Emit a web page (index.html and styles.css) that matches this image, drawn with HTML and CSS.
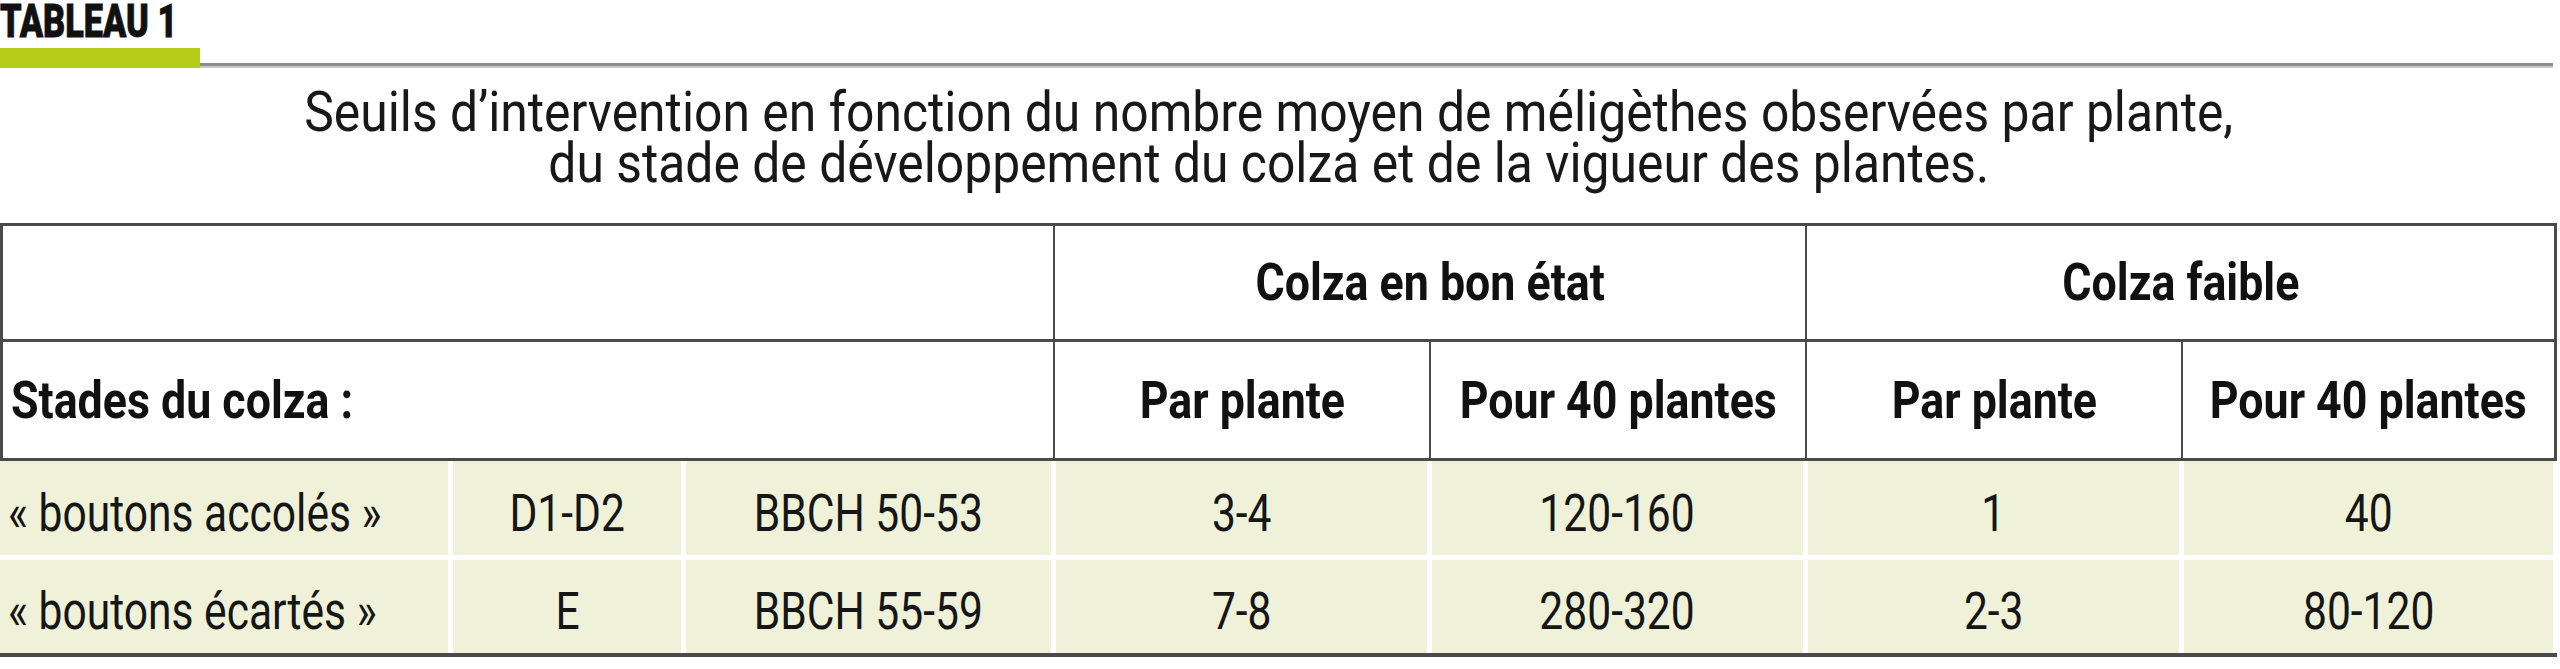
FILE: index.html
```html
<!DOCTYPE html>
<html lang="fr">
<head>
<meta charset="utf-8">
<title>Tableau 1</title>
<link rel="stylesheet" href="styles.css">
</head>
<body>
<div class="page">
  <div class="label"><span class="label-text">TABLEAU 1</span></div>
  <div class="rule"><span class="rule-accent"></span><span class="rule-line"></span></div>
  <p class="caption">Seuils d’intervention en fonction du nombre moyen de méligèthes observées par plante,<br>du stade de développement du colza et de la vigueur des plantes.</p>
  <table class="grid">
    <colgroup>
      <col class="c-stage">
      <col class="c-code">
      <col class="c-bbch">
      <col class="c-val">
      <col class="c-val">
      <col class="c-val">
      <col class="c-val">
    </colgroup>
    <thead>
      <tr class="h1">
        <td class="blank" colspan="3"></td>
        <th class="grp" colspan="2"><span class="sq">Colza en bon état</span></th>
        <th class="grp last" colspan="2"><span class="sq">Colza faible</span></th>
      </tr>
      <tr class="h2">
        <th class="stage-head" colspan="3"><span class="sq sq-left">Stades du colza :</span></th>
        <th class="sub"><span class="sq">Par plante</span></th>
        <th class="sub"><span class="sq">Pour 40 plantes</span></th>
        <th class="sub"><span class="sq">Par plante</span></th>
        <th class="sub last"><span class="sq">Pour 40 plantes</span></th>
      </tr>
    </thead>
    <tbody>
      <tr class="r1">
        <td class="name"><span class="sq sq-left">«&nbsp;boutons accolés&nbsp;»</span></td>
        <td><span class="sq">D1-D2</span></td>
        <td><span class="sq">BBCH 50-53</span></td>
        <td><span class="sq">3-4</span></td>
        <td><span class="sq">120-160</span></td>
        <td><span class="sq">1</span></td>
        <td><span class="sq">40</span></td>
      </tr>
      <tr class="r2">
        <td class="name"><span class="sq sq-left">«&nbsp;boutons écartés&nbsp;»</span></td>
        <td><span class="sq">E</span></td>
        <td><span class="sq">BBCH 55-59</span></td>
        <td><span class="sq">7-8</span></td>
        <td><span class="sq">280-320</span></td>
        <td><span class="sq">2-3</span></td>
        <td><span class="sq">80-120</span></td>
      </tr>
    </tbody>
  </table>
</div>
</body>
</html>
```

FILE: styles.css
```css
html, body {
  margin: 0;
  padding: 0;
  background: #ffffff;
}

body {
  font-family: Roboto, "Liberation Sans", Arial, sans-serif;
  color: #141414;
}

.page {
  width: 2557px;
}

.label {
  height: 41px;
  line-height: 41px;
}

.label-text {
  display: inline-block;
  font-size: 47px;
  font-weight: 900;
  color: #111111;
  -webkit-text-stroke: 0.8px #111111;
  transform: scaleX(0.73);
  transform-origin: left top;
  white-space: nowrap;
}

.rule {
  display: flex;
  height: 20px;
  margin-top: 7px;
}

.rule-accent {
  width: 200px;
  background: #b5cc1a;
}

.rule-line {
  flex: 1;
  align-self: flex-end;
  height: 2px;
  border-top: 3px solid #8d8d8d;
  background: #c8c8c8;
  margin-right: 4px;
}

.caption {
  margin: 19px 0 0;
  padding-right: 22px;
  font-size: 56px;
  line-height: 51px;
  text-align: center;
  font-weight: 400;
  color: #181818;
  white-space: nowrap;
  transform: scaleX(0.89);
}

.grid {
  margin-top: 34px;
  width: 2557px;
  table-layout: fixed;
  border-collapse: separate;
  border-spacing: 0;
  border-bottom: 4px solid #4a4a4a;
}

.c-stage { width: 450px; }
.c-code { width: 233px; }
.c-bbch { width: 370px; }
.c-val { width: 376px; }

.grid th,
.grid td {
  padding: 0;
  font-size: 52px;
  vertical-align: middle;
  white-space: nowrap;
}

.grid th {
  font-weight: 700;
  text-align: center;
  color: #111111;
}

.sq {
  display: inline-block;
  margin: 0 -60px;
  transform: scaleX(0.86);
  transform-origin: center;
}

.sq-left {
  margin: 0;
  transform-origin: left center;
}

.grid tbody .sq {
  transform: scaleX(0.835);
}

.grid tbody .sq-left {
  transform-origin: left center;
}

.h1 {
  height: 119px;
}

.h1 > * {
  border-top: 3px solid #4a4a4a;
  border-bottom: 3px solid #4a4a4a;
}

.h1 .blank {
  border-left: 3px solid #4a4a4a;
}

.grp {
  border-left: 2px solid #4a4a4a;
}

.h2 {
  height: 119px;
}

.h2 > * {
  border-bottom: 3px solid #4a4a4a;
}

.grid th.stage-head {
  border-left: 3px solid #4a4a4a;
  text-align: left;
  padding-left: 8px;
}

.sub {
  border-left: 2px solid #4a4a4a;
}

.grid .last {
  border-right: 3px solid #4a4a4a;
}

.grid tbody td {
  background: #eff2d9;
  text-align: center;
  font-size: 51px;
  font-weight: 400;
  color: #161616;
  padding-top: 10px;
  border-left: 3px solid #ffffff;
  border-right: 2px solid #ffffff;
}

.grid tbody td.name {
  text-align: left;
  padding-left: 8px;
  border-left: 0;
}

.grid tbody td:last-child {
  border-right: 4px solid #ffffff;
}

.r1 {
  height: 94px;
}

.r2 {
  height: 98px;
}

.r2 td {
  border-top: 5px solid #ffffff;
}
```
